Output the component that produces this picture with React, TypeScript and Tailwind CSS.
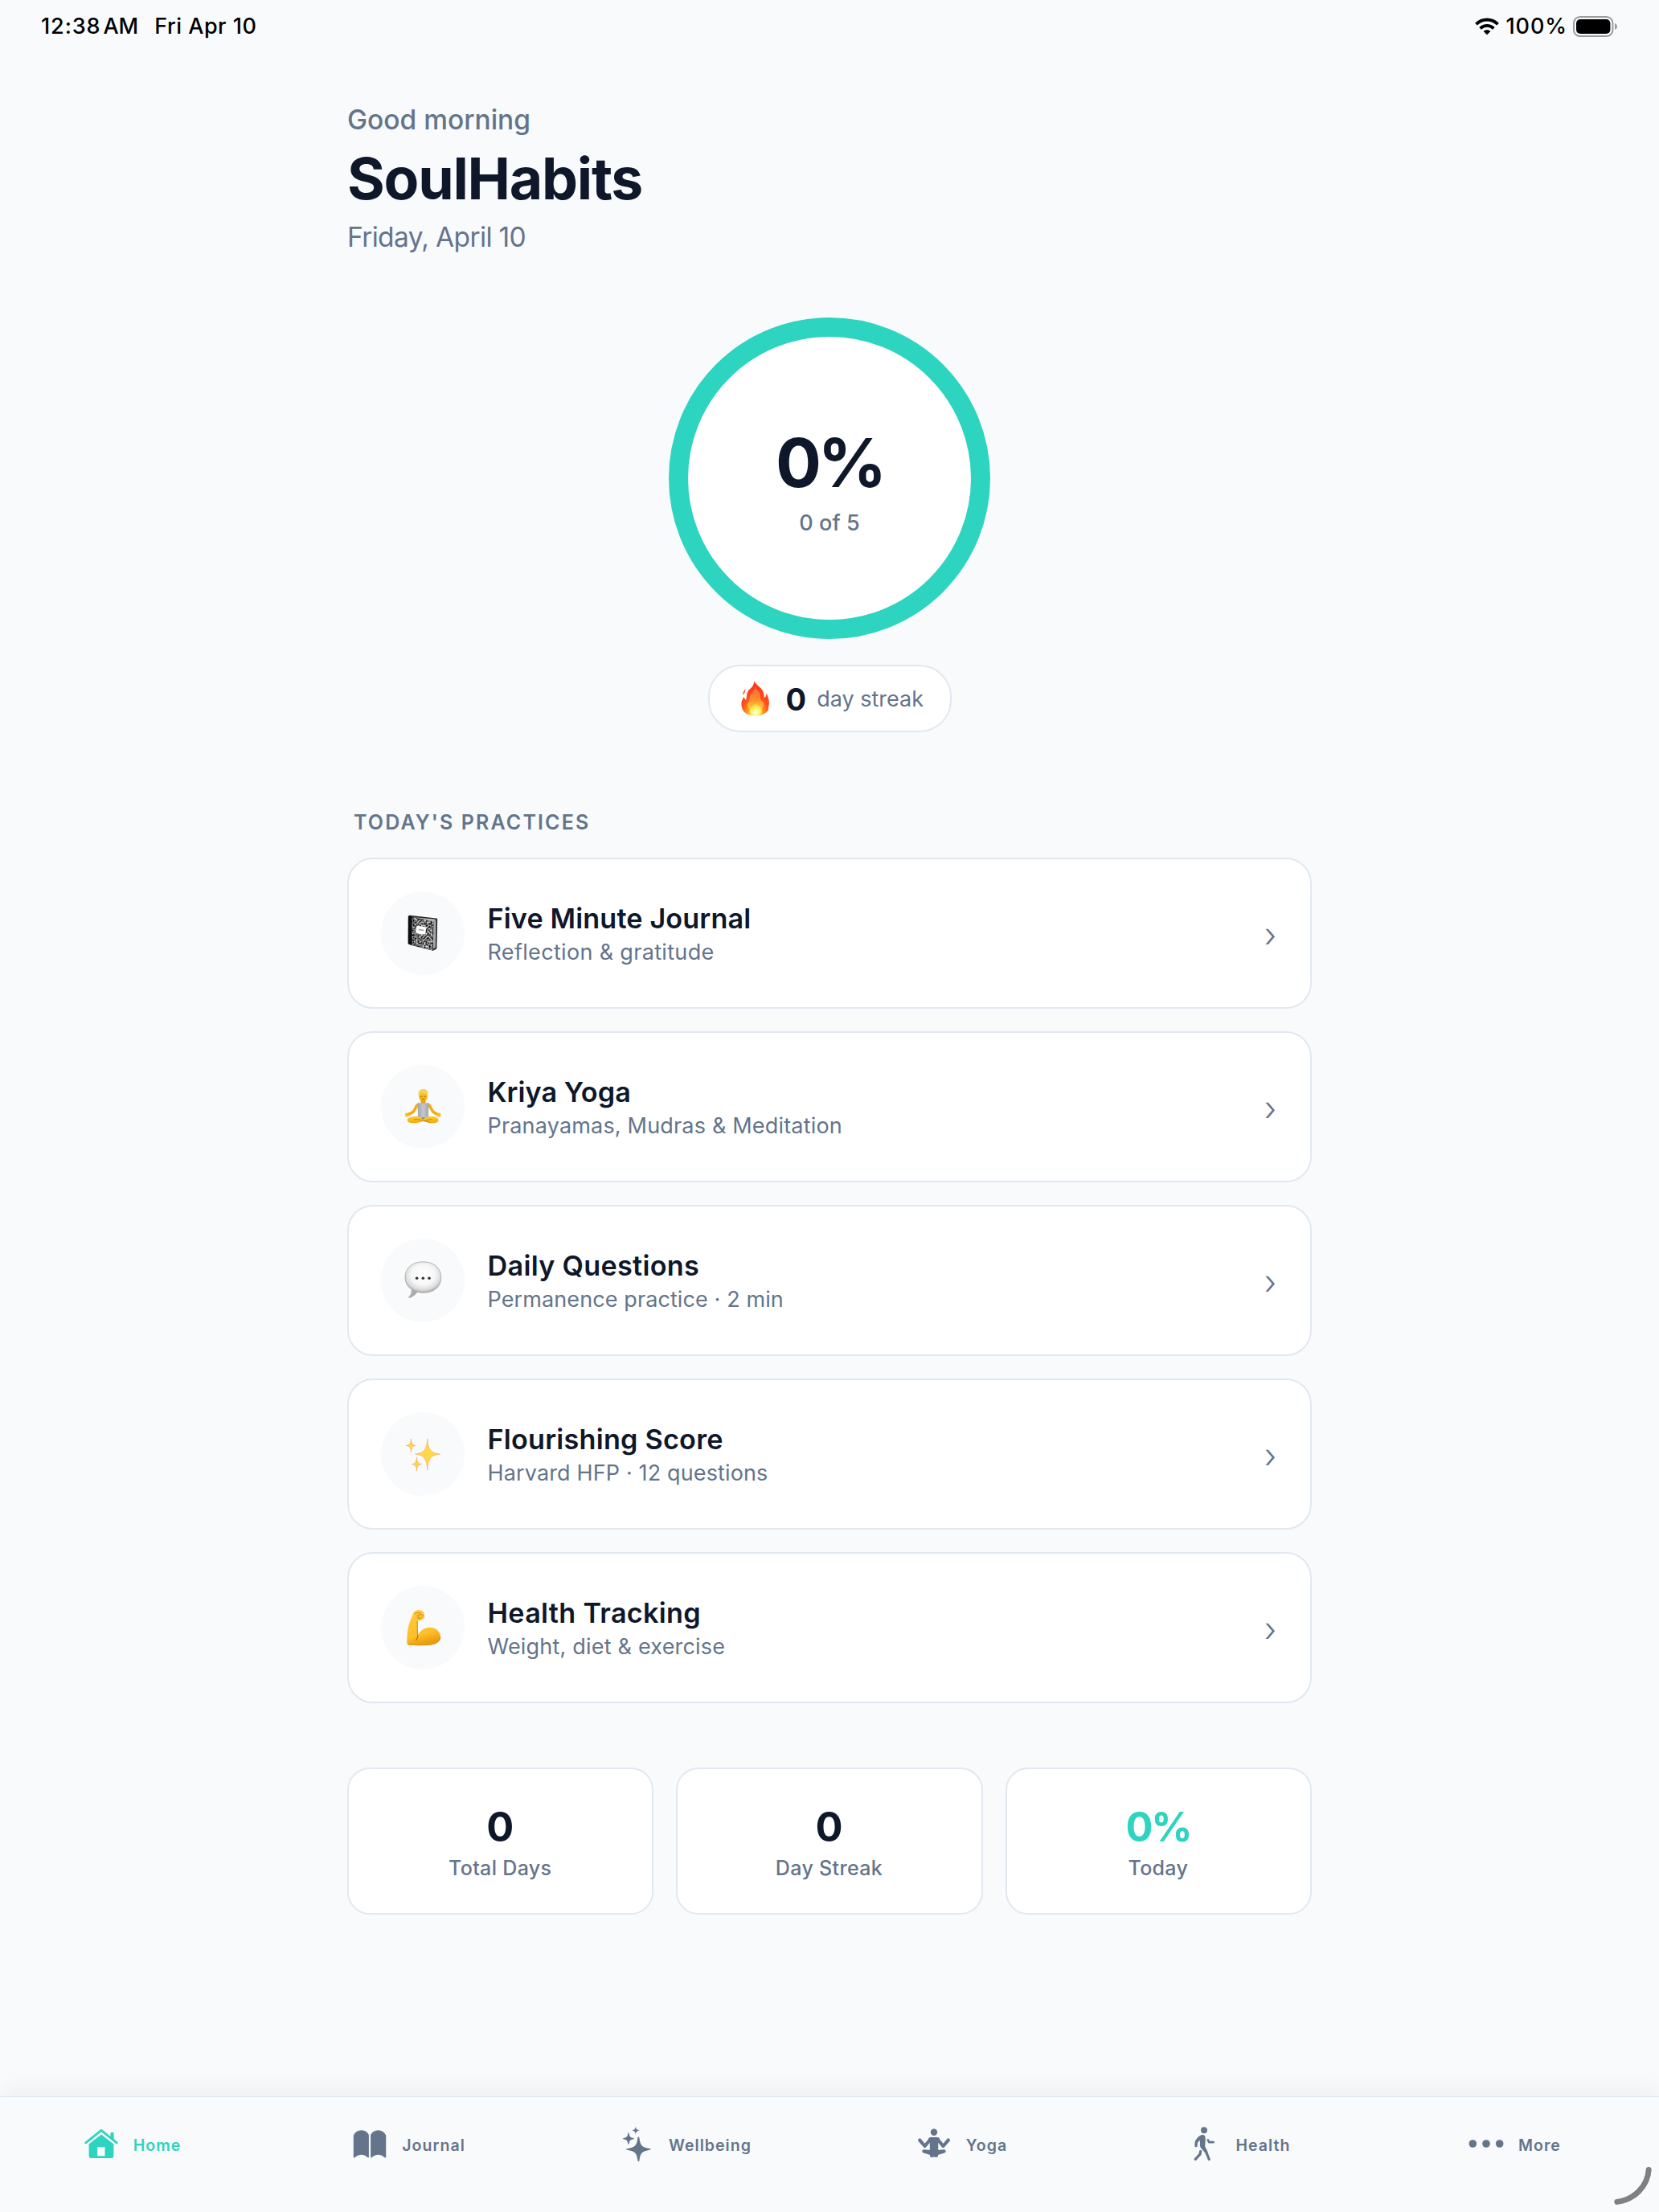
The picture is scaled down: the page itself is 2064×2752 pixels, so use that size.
import type { ReactNode } from "react";

/* ---------- status bar glyphs ---------- */

function WifiGlyph() {
  return (
    <svg className="h-[22px] w-[30px]" viewBox="0 0 30 22" fill="none" stroke="#000">
      <path d="M1.5 8.2C9 .6 21 .6 28.5 8.2" strokeWidth="3.8" />
      <path d="M6.6 13.3C11.4 8.7 18.6 8.7 23.4 13.3" strokeWidth="3.8" />
      <path d="M15 21.3 10.6 16.9C13 14.6 17 14.6 19.4 16.9Z" fill="#000" stroke="none" />
    </svg>
  );
}

function BatteryGlyph() {
  return (
    <svg className="h-[26px] w-[56px]" viewBox="0 0 56 26">
      <rect x="1" y="1" width="48.4" height="24" rx="7.6" fill="none" stroke="#9b9c9e" strokeWidth="2" />
      <rect x="4" y="4" width="42.4" height="18" rx="5" fill="#000" />
      <path d="M52 9C56 10.4 56 15.6 52 17Z" fill="#9b9c9e" />
    </svg>
  );
}

/* ---------- emoji artwork ---------- */

function FireArt() {
  return (
    <svg className="h-[44px] w-[36px] overflow-visible" viewBox="0 0 36 44">
      <defs>
        <radialGradient id="fire" cx="0.5" cy="0.95" r="0.85">
          <stop offset="0" stopColor="#fff59a" />
          <stop offset="0.18" stopColor="#ffd52e" />
          <stop offset="0.36" stopColor="#ff931f" />
          <stop offset="0.58" stopColor="#fd4f1d" />
          <stop offset="1" stopColor="#fb3a1b" />
        </radialGradient>
        <linearGradient id="fireCore" x1="0" y1="0" x2="0" y2="1">
          <stop offset="0" stopColor="#ff7240" />
          <stop offset="0.5" stopColor="#ff9430" />
          <stop offset="1" stopColor="#ffe44a" />
        </linearGradient>
        <radialGradient id="fireHeart" cx="0.5" cy="0.8" r="0.7">
          <stop offset="0" stopColor="#fffde6" />
          <stop offset="0.5" stopColor="#fff56a" />
          <stop offset="1" stopColor="#ffd22a" />
        </radialGradient>
      </defs>
      <path
        d="M16.2 0C17 4 24 7 27 12.4C29 16 28.2 19 29.2 21.2C30.6 20.4 31.4 18 31.6 15.2C33 19 35.4 24 34.8 29C34.4 32.4 33.4 34.4 34 36.4C31 40 27.4 43 18.4 43.6C10 43.6 5 41 2.2 36.6C1 34 .2 31 .4 27.6C.6 24.4 2.6 22.6 3 20C4 21.4 4.8 22.8 6 24C7.4 21 6.4 17 8.4 13.2C10.6 9.4 16 8 16.2 0Z"
        fill="url(#fire)"
      />
      <path
        d="M17.6 8C19 12 23.6 13 23.4 18.6C23.2 22.6 25.4 25 27.4 26C29.4 31 26 37.4 18 38.5C10 37.4 7 32 8.4 27.6C10.6 26.4 10.2 21.4 11.4 18C12.6 13.6 17 13 17.6 8Z"
        fill="url(#fireCore)"
        opacity="0.85"
      />
      <path d="M18 28C24 32 28 36.4 25 40.6C21 43.6 14 43.4 11 40.6C9 36.4 13 32.4 18 28Z" fill="url(#fireHeart)" />
      <path d="M5.6 10C3.6 12.6 2 14.4 2.4 17.4C4 16 5.4 13.6 5.6 10Z" fill="#fb4a24" />
    </svg>
  );
}

function NotebookArt() {
  return (
    <svg className="size-12" viewBox="0 0 48 48">
      <defs>
        <filter id="marble" x="0" y="0" width="1" height="1" colorInterpolationFilters="sRGB">
          <feTurbulence type="fractalNoise" baseFrequency="0.5" numOctaves="2" seed="7" />
          <feColorMatrix values="1.9 0 0 0 -0.52  1.9 0 0 0 -0.52  1.9 0 0 0 -0.52  0 0 0 0 1" />
        </filter>
        <clipPath id="cover">
          <path d="M9.6 3.4 37.2 9.2 36.6 45.6 9.6 38.6Z" />
        </clipPath>
      </defs>
      <path d="M8 1.8 41 5.4Q42.3 5.6 42.2 7L41.4 42.6Q41.3 43.6 40.4 43.9L36.8 45.8 8 38.4Z" fill="#2b2b2b" />
      <path d="M14 4.2 40 6.8 37.4 10 24 7Z" fill="#bdbdbd" />
      <path d="M37.4 9.6 40.4 7.4 39.8 41.8 36.8 43.6Z" fill="#a6a6a6" />
      <g clipPath="url(#cover)">
        <rect x="8" y="2" width="31" height="44" filter="url(#marble)" />
      </g>
      <path d="M5.8 3.4Q6 2 8 1.7L10.6 4V38.8L6.4 37.8Q5.6 37.4 5.6 36.4Z" fill="#0d0d0d" />
      <rect x="15.6" y="15.4" width="12.2" height="9.6" rx="2.4" transform="rotate(8 22 20)" fill="#fff" />
      <path d="M18.8 19.6 25.2 20.5" stroke="#9a9a9a" strokeWidth="1.5" />
    </svg>
  );
}

function LotusArt() {
  return (
    <svg className="size-12" viewBox="0 0 48 48">
      <defs>
        <linearGradient id="skin" x1="0" y1="0" x2="0" y2="1">
          <stop offset="0" stopColor="#ffcb2e" />
          <stop offset="1" stopColor="#f3a90e" />
        </linearGradient>
        <linearGradient id="vest" x1="0" y1="0" x2="1" y2="0">
          <stop offset="0" stopColor="#a3a5ad" />
          <stop offset="0.5" stopColor="#c6c7cc" />
          <stop offset="1" stopColor="#a3a5ad" />
        </linearGradient>
      </defs>
      <path d="M19.2 20.8C14.8 22 15.6 27 11.6 30.6L4.6 34.4" fill="none" stroke="#f3ae14" strokeWidth="3.6" strokeLinecap="round" strokeLinejoin="round" />
      <path d="M29.8 20.8C34.2 22 33.4 27 37.4 30.6L44 34.4" fill="none" stroke="#f3ae14" strokeWidth="3.6" strokeLinecap="round" strokeLinejoin="round" />
      <circle cx="4.2" cy="34" r="2.4" fill="#fbbd22" />
      <circle cx="44.2" cy="34" r="2.4" fill="#fbbd22" />
      <path d="M21.6 14H27.4V20H21.6Z" fill="#e79f10" />
      <path d="M18.2 19.6C21 20.2 21.6 19 22 18.6C23.4 20.2 25.6 20.2 27 18.6C27.4 19 28 20.2 30.8 19.6C32 24 30.4 30 31.2 37.6H17.8C18.6 30 17 24 18.2 19.6Z" fill="url(#vest)" />
      <path d="M4.6 40.4C5.4 36.6 12 35.4 18 36.2L24.5 38.4 31 36.2C37 35.4 43 36.6 43.6 40.4C43.4 43.6 39 44.6 33 44.2L24.5 42 16 44.2C10 44.6 5 43.8 4.6 40.4Z" fill="url(#skin)" />
      <path d="M13 39.6C19 39.4 26 41 33 43.6M36 39.6C33 39.4 29 40.4 25 42" fill="none" stroke="#d08407" strokeWidth="0.9" />
      <path d="M21.6 37.2 24.5 39.6 27.4 37.2Z" fill="#70819a" />
      <ellipse cx="24.5" cy="11" rx="5.4" ry="6.4" fill="url(#skin)" />
      <path d="M18.7 9.2C17.6 4.4 21 2 24.6 2C28.4 2 31.2 4.4 30.3 9.2C28.8 7.4 26 7.2 23.4 6.4C21.4 6.6 19.8 7.4 18.7 9.2Z" fill="#f7d25a" />
      <path d="M21.2 11.2H23.2M25.8 11.2H27.8M23.2 14.4H25.8" stroke="#a8650a" strokeWidth="0.9" strokeLinecap="round" />
    </svg>
  );
}

function BubbleArt() {
  return (
    <svg className="size-12" viewBox="0 0 48 48">
      <defs>
        <radialGradient id="bubble" cx="0.5" cy="0.42" r="0.6">
          <stop offset="0" stopColor="#ffffff" />
          <stop offset="0.55" stopColor="#f7f7f7" />
          <stop offset="0.8" stopColor="#dcdcdc" />
          <stop offset="1" stopColor="#a2a2a2" />
        </radialGradient>
      </defs>
      <path d="M9.6 33C10.4 38 9.4 42 5.8 45.4C6 46.6 12.4 45.4 17.4 38.4Z" fill="#adadad" />
      <path d="M24.3 .8C38 .8 46.8 8.6 46.8 20.2C46.8 31.6 38 39.4 24.6 39.4C22 39.4 19.6 39 17.4 38.4C14 37.8 2 33 2 20.2C2 8.6 11 .8 24.3 .8Z" fill="url(#bubble)" stroke="#a0a0a0" strokeWidth="0.7" />
      <circle cx="16.6" cy="21.2" r="1.8" fill="#333" />
      <circle cx="24.3" cy="21.2" r="1.8" fill="#333" />
      <circle cx="32" cy="21.2" r="1.8" fill="#333" />
    </svg>
  );
}

function SparklesArt() {
  return (
    <svg className="size-12" viewBox="0 0 48 48" stroke="#f5a45a" strokeWidth="0.6" strokeLinejoin="round">
      <path d="M29.8 5C30.6 17.8 33.4 22.8 45.6 24C33.4 25.2 30.6 30.6 29.8 43.8C29 30.6 26.2 25.2 14.4 24C26.2 22.8 29 17.8 29.8 5Z" fill="#ffd84a" />
      <path d="M9.4 4.8C9.8 10.8 11 12.8 15.2 13.4C11 14 9.8 16 9.4 22C9 16 7.8 14 3.4 13.4C7.8 12.8 9 10.8 9.4 4.8Z" fill="#ffd640" />
      <path d="M16.4 28C16.8 33.8 18 36 22.6 36.6C18 37.2 16.8 39.4 16.4 45C16 39.4 14.8 37.2 10.4 36.6C14.8 36 16 33.8 16.4 28Z" fill="#ffd640" />
    </svg>
  );
}

function BicepsArt() {
  return (
    <svg className="size-12" viewBox="0 0 48 48">
      <defs>
        <linearGradient id="arm" x1="0" y1="0" x2="0.25" y2="1">
          <stop offset="0" stopColor="#ffcc38" />
          <stop offset="0.75" stopColor="#fdbf2b" />
          <stop offset="1" stopColor="#eb9f10" />
        </linearGradient>
      </defs>
      <path
        d="M11.6 7.6C12.4 3.6 17.6 1.2 20.4 2.4C23 2.2 25.6 4.4 25.4 6.8C27 8.4 26.4 12.4 23.6 13.6C22.4 15.4 19.6 15.8 17.8 15.2C16.8 20 17.2 27 17.8 33.8C21 27.4 27 23.4 33.6 23.8C41 24.2 46.2 29.4 46 36C45.6 43.4 38 45.6 29 45.8C20 46.2 10 46.4 5.2 45C4 43.8 4.2 38 4.6 33.6C5 26.4 6.4 20.4 8.6 14.8C9.8 12 10.6 10.4 11.6 7.6Z"
        fill="url(#arm)"
      />
      <path d="M17.8 33.8C17.6 36.4 16.8 38 15.6 39.6" fill="none" stroke="#a86508" strokeWidth="1.1" strokeLinecap="round" />
      <path d="M17.4 16C17 22 17.2 28 17.8 33.8" fill="none" stroke="#c9840c" strokeWidth="1" />
      <path d="M14.6 6.4C17 5 19.8 5.2 21.6 6.6M16.4 9.6C19 7.4 22.4 7.6 24.4 8.4M17.6 12C19.6 13.4 22 12 23.8 10.4M18.8 8.6C17.4 9.8 17.8 11.4 19.4 11.6" fill="none" stroke="#c9800c" strokeWidth="0.9" strokeLinecap="round" />
      <path d="M5 44.6C14 46 26 46 33 45C40 44 45 41.6 46 36" fill="none" stroke="#dc920e" strokeWidth="1" />
    </svg>
  );
}

/* ---------- tab bar glyphs, all on a 60x48 stage ---------- */

function TabGlyph({ children }: { children: ReactNode }) {
  return (
    <svg className="h-12 w-15 shrink-0" viewBox="0 0 60 48" fill="currentColor" stroke="none">
      {children}
    </svg>
  );
}

const homeGlyph = (
  <TabGlyph>
    <path d="M10.8 20.8 30 5.4 49.2 20.8" fill="none" stroke="currentColor" strokeWidth="2.8" strokeLinecap="round" strokeLinejoin="round" />
    <path d="M41.5 15.4V9Q41.5 8 42.5 8H44.6Q45.6 8 45.6 9V18.6Z" />
    <path
      fillRule="evenodd"
      d="M30 10.6 45.4 22.6V37Q45.4 40 42.4 40H17.6Q14.6 40 14.6 37V22.6ZM25.8 26Q25.2 26 25.2 26.6V36.7Q25.2 37.3 25.8 37.3H33.9Q34.5 37.3 34.5 36.7V26.6Q34.5 26 33.9 26Z"
    />
  </TabGlyph>
);

const bookGlyph = (
  <TabGlyph>
    <path d="M9.8 11.6C12 7.4 15.6 5.3 19.4 5.3C23.4 5.3 27 7.4 28.9 11V39C28.4 39.8 27.6 39.4 27 38.8C22.6 34.6 16.4 34.6 12 38.8C11.2 39.6 10 39.8 9.8 38.8Z" />
    <path d="M50.2 11.6C48 7.4 44.4 5.3 40.6 5.3C36.6 5.3 33 7.4 31.1 11V39C31.6 39.8 32.4 39.4 33 38.8C37.4 34.6 43.6 34.6 48 38.8C48.8 39.6 50 39.8 50.2 38.8Z" />
  </TabGlyph>
);

const sparkleGlyph = (
  <TabGlyph>
    <path d="M32.4 13.6C33 13.6 33.3 14 33.4 14.8C34.6 24.4 36.6 26.6 46.4 28.2C48.2 28.6 48.2 29.4 46.4 29.8C36.6 31.4 34.6 33.6 33.4 43.2C33.2 44.4 31.6 44.4 31.4 43.2C30.2 33.6 28.2 31.4 18.4 29.8C16.6 29.4 16.6 28.6 18.4 28.2C28.2 26.6 30.2 24.4 31.4 14.8C31.5 14 31.8 13.6 32.4 13.6Z" />
    <path d="M19.9 8.4C20.4 8.4 20.5 8.8 20.6 9.3C21.2 13.4 22.2 14.5 26.4 15.2C27.3 15.4 27.3 16 26.4 16.2C22.2 16.9 21.2 18 20.6 22.1C20.5 23.2 19.3 23.2 19.2 22.1C18.6 18 17.6 16.9 13.4 16.2C12.5 16 12.5 15.4 13.4 15.2C17.6 14.5 18.6 13.4 19.2 9.3C19.3 8.8 19.4 8.4 19.9 8.4Z" />
    <path d="M28.9 .8C29.6 4 30.2 4.7 33.6 5.4C30.2 6.1 29.6 6.8 28.9 10.2C28.2 6.8 27.6 6.1 24.3 5.4C27.6 4.7 28.2 4 28.9 .8Z" />
  </TabGlyph>
);

const yogaGlyph = (
  <TabGlyph>
    <circle cx="30" cy="7.8" r="4.2" />
    <path d="M26 16.2 18.6 25 12.2 17.6M34 16.2 41.4 25 47.8 17.6" fill="none" stroke="currentColor" strokeWidth="4.2" strokeLinecap="round" strokeLinejoin="round" />
    <path d="M26 14H34Q35.6 14 37 15.6L35.2 21V32H24.8V21L23 15.6Q24.4 14 26 14Z" />
    <path d="M17.4 29.2 26 30H34L42.6 29.2C45.2 29.6 45.4 32.6 43 33.6L35 36C35.4 38 34 39.4 32 39L30 38.2 28 39C26 39.4 24.6 38 25 36L17 33.6C14.6 32.6 14.8 29.6 17.4 29.2Z" />
  </TabGlyph>
);

const walkGlyph = (
  <TabGlyph>
    <circle cx="30" cy="5.2" r="4" />
    <path d="M24.6 12.2C27 10.6 30.4 10.4 31.4 13.2C32 16 31.6 20 31.2 25.4C33 29 34.4 31 35 34L37.8 41.2C38.2 43 35.6 43.6 34.8 42.2C33.6 38.4 32 34.6 30.6 32.4C28.4 29.6 25.2 27.6 24.9 24V17.8L22 20.4 21.6 25.2C21.2 26.6 18.6 26.6 18.4 25C18.4 22.6 18.4 20.6 19 18.8C20.4 16 22.4 13.8 24.6 12.2Z" />
    <path d="M34.8 17.4 36.2 20.2H41.6" fill="none" stroke="currentColor" strokeWidth="2.7" strokeLinecap="round" strokeLinejoin="round" />
    <path d="M25.6 31.6 25 35.2 19.2 41.4" fill="none" stroke="currentColor" strokeWidth="3.2" strokeLinecap="round" strokeLinejoin="round" />
  </TabGlyph>
);

const moreGlyph = (
  <TabGlyph>
    <circle cx="13.3" cy="22" r="4.8" />
    <circle cx="30" cy="22" r="4.8" />
    <circle cx="46.7" cy="22" r="4.8" />
  </TabGlyph>
);

/* ---------- data ---------- */

const practices = [
  { title: "Five Minute Journal", note: "Reflection & gratitude", art: <NotebookArt />, titleGap: "tracking-[0.14px]", noteGap: "tracking-[0.33px]" },
  { title: "Kriya Yoga", note: "Pranayamas, Mudras & Meditation", art: <LotusArt />, titleGap: "tracking-[0.05px]", noteGap: "tracking-[0.18px]" },
  { title: "Daily Questions", note: "Permanence practice · 2 min", art: <BubbleArt />, titleGap: "tracking-[0.3px]", noteGap: "tracking-[0.1px]" },
  { title: "Flourishing Score", note: "Harvard HFP · 12 questions", art: <SparklesArt />, titleGap: "tracking-[0.23px]", noteGap: "tracking-[0.14px]" },
  { title: "Health Tracking", note: "Weight, diet & exercise", art: <BicepsArt />, titleGap: "tracking-[0.3px]", noteGap: "tracking-[0.2px]" },
];

const stats = [
  { value: "0", label: "Total Days", color: "text-[#0f172a]" },
  { value: "0", label: "Day Streak", color: "text-[#0f172a]" },
  { value: "0%", label: "Today", color: "text-[#2dd4bf] tracking-[-2.4px]" },
];

const tabs = [
  { label: "Home", glyph: homeGlyph, active: true },
  { label: "Journal", glyph: bookGlyph },
  { label: "Wellbeing", glyph: sparkleGlyph },
  { label: "Yoga", glyph: yogaGlyph },
  { label: "Health", glyph: walkGlyph },
  { label: "More", glyph: moreGlyph },
];

/* ---------- screen ---------- */

export default function App() {
  return (
    <div className="relative flex h-[2752px] w-[2064px] flex-col overflow-hidden bg-[#f8fafc] font-['Inter',sans-serif] text-[#64748b]">
      <header className="flex h-16 items-center justify-between pt-px pr-[51px] pl-[51px] text-[27px] leading-9 font-medium text-black">
        <div className="flex whitespace-pre">
          <span className="tracking-[0.9px]">12:38</span>
          <span className="ml-[3px]">AM</span>
          <span className="ml-[20px] tracking-[0.5px]">Fri Apr 10</span>
        </div>
        <div className="flex items-center">
          <WifiGlyph />
          <span className="ml-[9px] tracking-[0.9px]">100%</span>
          <span className="ml-[7px] flex">
            <BatteryGlyph />
          </span>
        </div>
      </header>

      <main className="mx-auto flex w-[1200px] grow flex-col pt-[65px]">
        <p className="text-[33.5px] leading-10 font-medium">Good morning</p>
        <h1 className="mt-[10px] text-[71.5px] leading-[86px] font-bold tracking-[-1.25px] text-[#0f172a]">SoulHabits</h1>
        <p className="mt-[10px] text-[33.5px] leading-10 tracking-[-0.65px]">Friday, April 10</p>

        <div className="mt-20 flex size-[400px] flex-col items-center self-center rounded-full border-[24px] border-[#2dd4bf] bg-white pt-[108px]">
          <div className="text-[84.5px] leading-[96px] font-bold tracking-[-4.5px] text-[#0f172a]">0%</div>
          <div className="mt-[10px] text-[27px] leading-9 font-medium tracking-[0.1px]">0 of 5</div>
        </div>

        <div className="mt-8 flex h-[84px] w-[303px] items-center self-center rounded-[40px] border-2 border-[#e2e8f0] bg-white pl-[39px]">
          <FireArt />
          <span className="mt-0.5 ml-[20px] text-[38px] leading-[46px] font-bold text-[#0f172a]">0</span>
          <span className="mt-0.5 ml-[13px] text-[27px] leading-9">day streak</span>
        </div>

        <h2 className="mt-24 px-2 text-[25px] leading-8 font-semibold tracking-[2.13px]">TODAY'S PRACTICES</h2>

        <div className="mt-7 flex flex-col gap-7">
          {practices.map((p) => (
            <div key={p.title} className="flex h-[188px] items-center rounded-[32px] border-2 border-[#e2e8f0] bg-white px-10">
              <div className="flex size-[104px] items-center justify-center rounded-full bg-[#f8fafc]">{p.art}</div>
              <div className="mt-0.5 ml-[28.5px] grow">
                <div className={`text-[34.2px] leading-11 font-semibold text-[#0f172a] ${p.titleGap}`}>{p.title}</div>
                <div className={`mt-0.5 text-[27px] leading-9 ${p.noteGap}`}>{p.note}</div>
              </div>
              <span className="mt-[3px] mr-0.5 text-[42px] leading-[52px] font-light">›</span>
            </div>
          ))}
        </div>

        <div className="mt-20 grid grid-cols-3 gap-7">
          {stats.map((s) => (
            <div key={s.label} className="flex h-[183px] flex-col items-center rounded-[28px] border-2 border-[#e2e8f0] bg-white pr-px pt-[42px]">
              <div className={`text-[50.5px] leading-[60px] font-bold ${s.color}`}>{s.value}</div>
              <div className="mt-[5px] text-[25px] leading-8 font-medium tracking-[0.34px]">{s.label}</div>
            </div>
          ))}
        </div>
      </main>

      <nav className="grid h-36 grid-cols-6 border-t border-[#dde7f0] bg-[#f8fafc] shadow-[0_-8px_32px_rgba(0,0,0,0.05)]">
        {tabs.map((t) => (
          <div key={t.label} className={`flex h-[120px] items-center justify-center gap-[10px] pr-[23px] ${t.active ? "text-[#2dd4bf]" : "text-[#64748b]"}`}>
            {t.glyph}
            <span className="text-[19.5px] leading-6 font-semibold tracking-[1.04px]">{t.label}</span>
          </div>
        ))}
      </nav>

      <svg className="absolute right-0 bottom-0 size-15" viewBox="0 0 60 60" fill="none">
        <path d="M47.2 7.4C46 27 30 44.6 7.8 47.4" stroke="#808080" strokeWidth="7" strokeLinecap="round" />
      </svg>
    </div>
  );
}
